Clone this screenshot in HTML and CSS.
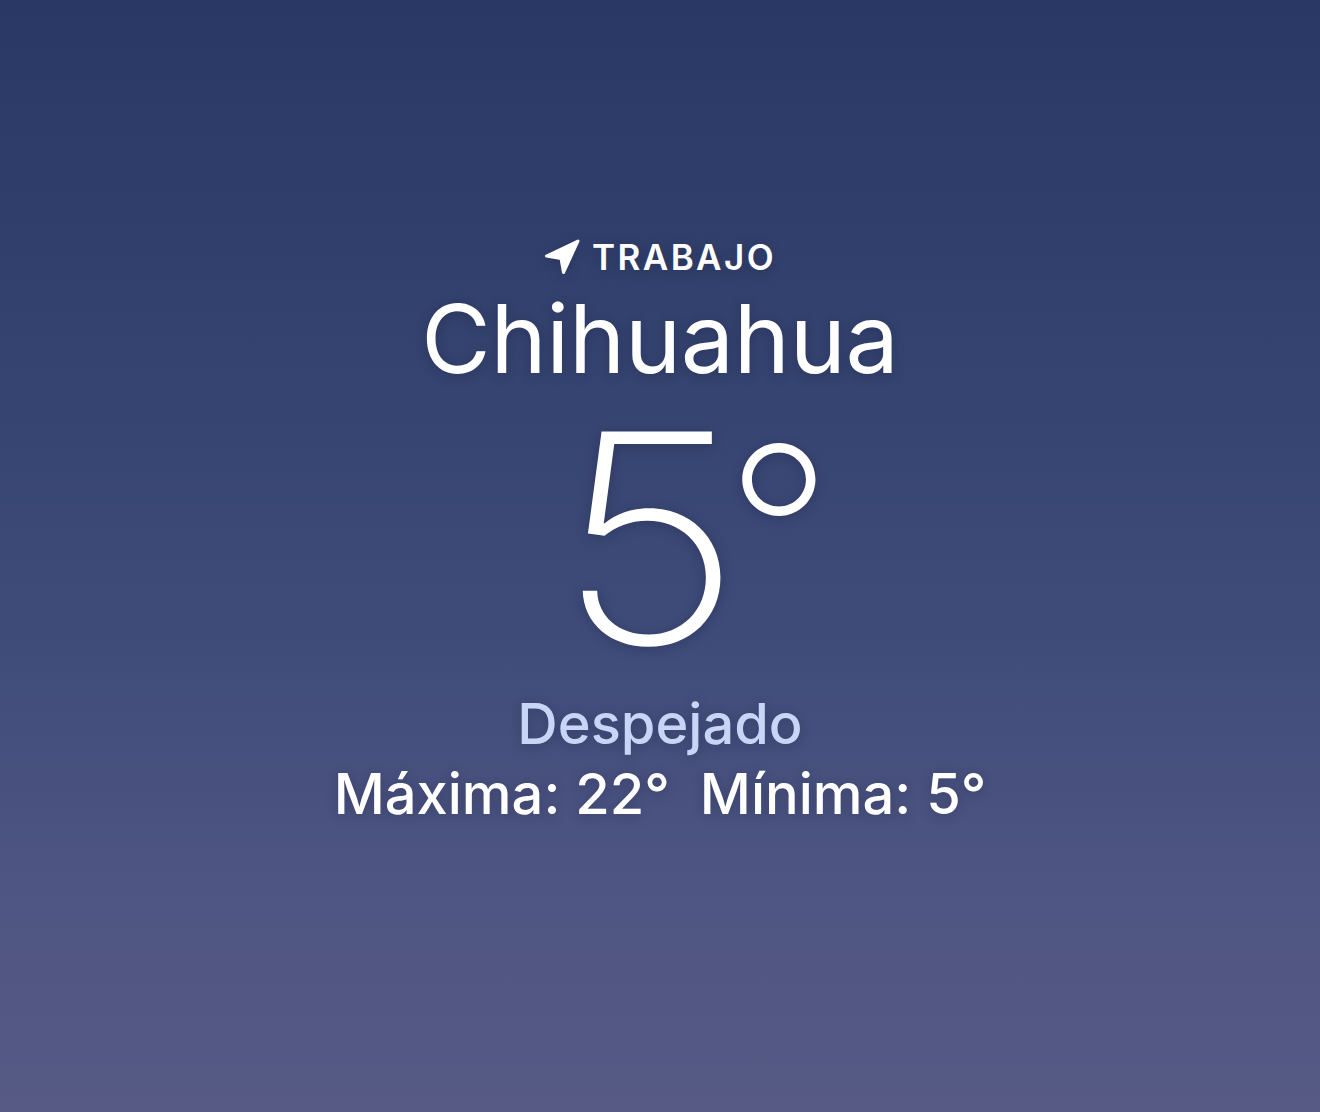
FILE: index.html
```html
<!DOCTYPE html>
<html lang="es">
<head>
    <meta charset="UTF-8">
    <meta name="viewport" content="width=device-width, initial-scale=1.0">
    <title>Tiempo - Chihuahua</title>
    <link rel="stylesheet" href="styles.css">
</head>
<body>
    <main class="weather">
        <div class="place-label">
            <svg class="place-icon" viewBox="0 0 36 36" width="36" height="36">
                <path d="M34 2 L2.5 17 L17 19.5 L19.5 33.5 Z" fill="#fff" stroke="#fff" stroke-width="3" stroke-linejoin="round"/>
            </svg>
            <span>TRABAJO</span>
        </div>
        <h1 class="city">Chihuahua</h1>
        <div class="temp">
            <span class="digit">5</span>
            <span class="deg">°</span>
        </div>
        <div class="condition">Despejado</div>
        <div class="range">Máxima: 22°&nbsp; Mínima: 5°</div>
    </main>
</body>
</html>
```

FILE: styles.css
```css
html, body {
    margin: 0;
    padding: 0;
}

body {
    height: 1112px;
    overflow: hidden;
    font-family: 'Inter', 'Liberation Sans', sans-serif;
    color: #fff;
    background: linear-gradient(180deg, #293864 0%, #34426f 30%, #3f4c7a 58%, #4f5582 80%, #565a85 100%);
}

.weather {
    display: flex;
    flex-direction: column;
    align-items: center;
    padding-top: 236px;
    text-shadow: 0 2px 12px rgba(10, 15, 40, 0.25);
}

.place-label {
    display: flex;
    align-items: center;
    gap: 12px;
    font-size: 35px;
    font-weight: 600;
    letter-spacing: 2.4px;
    line-height: 42px;
}

.place-icon {
    filter: drop-shadow(0 2px 6px rgba(10, 15, 40, 0.25));
}

.city {
    margin: 5px 0 0;
    font-size: 95px;
    font-weight: 400;
    line-height: 112px;
    letter-spacing: -0.3px;
}

.temp {
    display: flex;
    align-items: flex-start;
    height: 280px;
    margin-top: 3px;
    padding-left: 78px;
}

.digit {
    display: inline-block;
    font-size: 292px;
    font-weight: 200;
    line-height: 280px;
    transform: scaleX(1.1);
}

.deg {
    display: inline-block;
    margin-top: 14px;
    margin-left: -9px;
    font-size: 238px;
    font-weight: 200;
    line-height: 238px;
}

.condition {
    margin-top: 14px;
    font-size: 56px;
    font-weight: 500;
    color: #c9d5f7;
    line-height: 64px;
}

.range {
    margin-top: 6px;
    font-size: 56px;
    font-weight: 500;
    line-height: 64px;
}
```
